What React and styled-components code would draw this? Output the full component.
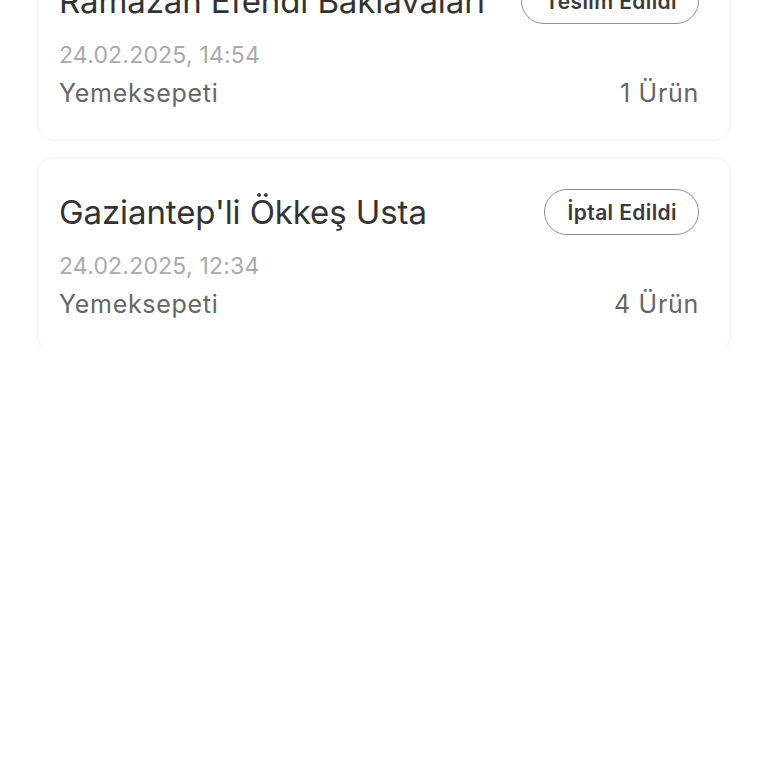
import React from 'react';
import styled, { createGlobalStyle } from 'styled-components';

const GlobalStyle = createGlobalStyle`
  html, body {
    margin: 0;
    padding: 0;
    background: #ffffff;
    font-family: Inter, "Noto Sans", "Liberation Sans", sans-serif;
  }
`;

const orders = [
    { id: 1, name: 'Ramazan Efendi Baklavaları', status: 'Teslim Edildi', date: '24.02.2025, 14:54', platform: 'Yemeksepeti', count: 1 },
    { id: 2, name: "Gaziantep'li Ökkeş Usta", status: 'İptal Edildi', date: '24.02.2025, 12:34', platform: 'Yemeksepeti', count: 4 },
];

const OrderCard = ({ order }) => (
    <Card>
        <Header>
            <Title>{order.name}</Title>
            <Badge>{order.status}</Badge>
        </Header>
        <DateText>{order.date}</DateText>
        <Footer>
            <span>{order.platform}</span>
            <span>{order.count} Ürün</span>
        </Footer>
    </Card>
);

function App() {
    return (
        <>
            <GlobalStyle />
            <List>
                {orders.map(order => (
                    <OrderCard key={order.id} order={order} />
                ))}
            </List>
        </>
    );
}

// styles
const List = styled.div`
  display: flex;
  flex-direction: column;
  gap: 20px;
  padding: 0 39px;
  margin-top: -52px;
`;

const Card = styled.div`
  background: #fff;
  border-radius: 14px;
  box-shadow: 0 0 6px rgba(0, 0, 0, 0.08);
  padding: 30px 30px 30px 20px;
`;

const Header = styled.div`
  display: flex;
  align-items: center;
  justify-content: space-between;
  height: 46px;
`;

const Title = styled.div`
  font-size: 33px;
  color: #333;
  white-space: nowrap;
  letter-spacing: -0.1px;
`;

const Badge = styled.div`
  height: 46px;
  box-sizing: border-box;
  padding: 0 21px 0 23px;
  border: 1.5px solid #8f8f8f;
  border-radius: 23px;
  display: flex;
  align-items: center;
  font-size: 21px;
  font-weight: 600;
  letter-spacing: 0.4px;
  color: #3a3a3a;
`;

const DateText = styled.div`
  margin-top: 16px;
  font-size: 23px;
  line-height: 30px;
  letter-spacing: 0.2px;
  color: #aaa;
`;

const Footer = styled.div`
  margin-top: 7px;
  display: flex;
  justify-content: space-between;
  font-size: 25px;
  line-height: 32px;
  letter-spacing: 0.7px;
  color: #666;
`;

export default App;
